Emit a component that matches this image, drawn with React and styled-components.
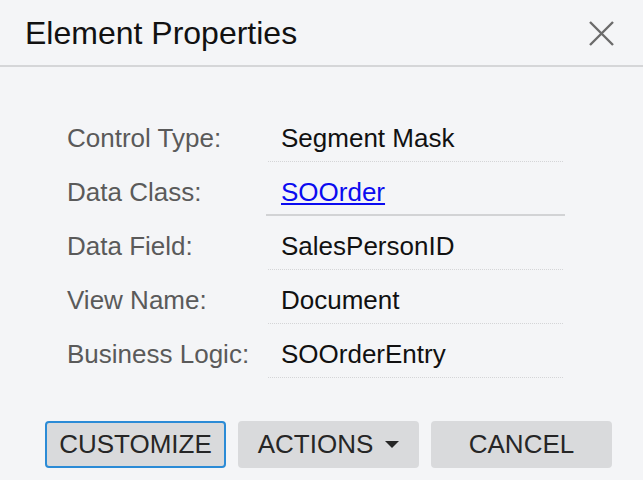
import React from "react";
import styled, { createGlobalStyle } from "styled-components";

const GlobalStyle = createGlobalStyle`
  body {
    margin: 0;
    background: #f4f5f7;
    font-family: "Liberation Sans", Arial, sans-serif;
  }
`;

const rows = [
  { label: "Control Type:", value: "Segment Mask" },
  { label: "Data Class:", value: "SOOrder", link: true },
  { label: "Data Field:", value: "SalesPersonID" },
  { label: "View Name:", value: "Document" },
  { label: "Business Logic:", value: "SOOrderEntry" },
];

const App = () => {
  return (
    <>
      <GlobalStyle />
      <Dialog>
        <Header>
          <Title>Element Properties</Title>
          <CloseBtn aria-label="close">
            <svg width="25" height="25" viewBox="0 0 25 25">
              <path
                d="M1 1 L24 24 M24 1 L1 24"
                stroke="#6b6b6b"
                strokeWidth="2.4"
                fill="none"
              />
            </svg>
          </CloseBtn>
        </Header>
        <Body>
          {rows.map((row) => (
            <Row key={row.label}>
              <Label>{row.label}</Label>
              <Value $focused={row.link}>
                {row.link ? <Link href="#">{row.value}</Link> : row.value}
              </Value>
            </Row>
          ))}
        </Body>
        <Footer>
          <Button $primary>CUSTOMIZE</Button>
          <Button>
            ACTIONS
            <Caret />
          </Button>
          <Button>CANCEL</Button>
        </Footer>
      </Dialog>
    </>
  );
};

export default App;

const Dialog = styled.div`
  width: 643px;
  height: 480px;
  display: flex;
  flex-direction: column;
  background: #f4f5f7;
  overflow: hidden;
`;

const Header = styled.div`
  height: 67px;
  box-sizing: border-box;
  border-bottom: 2px solid #d5d6d8;
  display: flex;
  align-items: center;
  justify-content: space-between;
  padding: 2px 29px 0 25px;
`;

const Title = styled.h1`
  margin: 0;
  font-size: 32px;
  font-weight: 400;
  color: #111;
`;

const CloseBtn = styled.button`
  border: 0;
  background: transparent;
  padding: 0;
  width: 25px;
  height: 25px;
  display: flex;
  cursor: pointer;
`;

const Body = styled.div`
  padding: 41px 0 0 67px;
  display: flex;
  flex-direction: column;
`;

const Row = styled.div`
  display: grid;
  grid-template-columns: 201px 295px;
  height: 54px;
`;

const Label = styled.div`
  font-size: 26px;
  color: #5a5a5a;
  padding-top: 15px;
  line-height: 30px;
  white-space: nowrap;
`;

const Value = styled.div`
  font-size: 26px;
  color: #111;
  line-height: 30px;
  padding-top: 15px;
  padding-left: ${(p) => (p.$focused ? "15px" : "13px")};
  margin: ${(p) => (p.$focused ? "0 -2px" : "0")};
  box-sizing: border-box;
  border-bottom: ${(p) =>
    p.$focused ? "2px solid #d2d3d5" : "1px dotted #d4d5d7"};
  white-space: nowrap;
`;

const Link = styled.a`
  color: #0b0bf0;
  text-decoration: underline;
`;

const Footer = styled.div`
  display: flex;
  gap: 12px;
  padding: 43px 0 0 45px;
`;

const Button = styled.button`
  width: 181px;
  height: 47px;
  box-sizing: border-box;
  background: #d9dadc;
  border: 2px solid ${(p) => (p.$primary ? "#2b8bd6" : "#d9dadc")};
  border-radius: 4px;
  font-family: "Liberation Sans", Arial, sans-serif;
  font-size: 26px;
  color: #262626;
  display: flex;
  align-items: center;
  justify-content: center;
  gap: 12px;
  padding: 0;
  cursor: pointer;
`;

const Caret = styled.span`
  width: 0;
  height: 0;
  border-left: 7px solid transparent;
  border-right: 7px solid transparent;
  border-top: 7px solid #262626;
`;
